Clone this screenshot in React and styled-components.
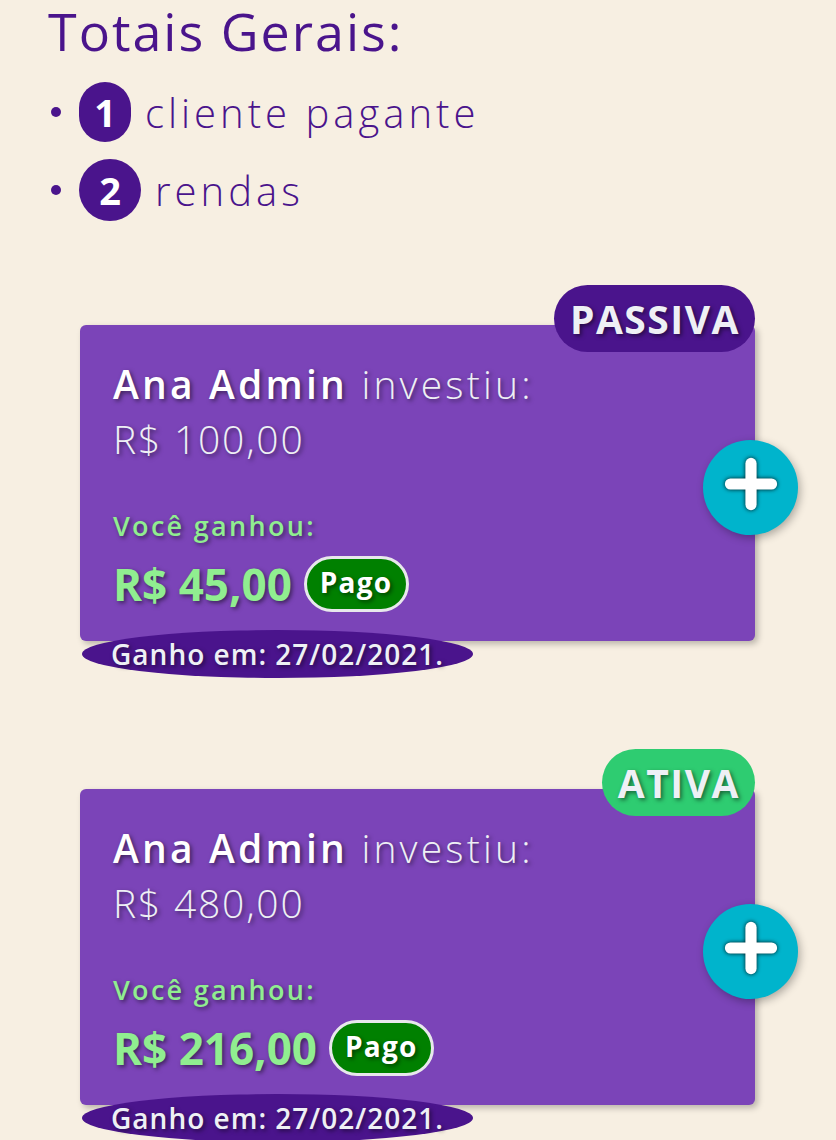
import styled, { createGlobalStyle } from "styled-components"

const GlobalStyle = createGlobalStyle`
  body {
    margin: 0;
    background: #f7efe2;
    font-family: "Open Sans", "Noto Sans", sans-serif;
  }
`;

const incomes = [
  { id: 1, type: "passiva", investor: "Ana Admin", invested: "R$ 100,00", earned: "R$ 45,00", date: "27/02/2021" },
  { id: 2, type: "ativa", investor: "Ana Admin", invested: "R$ 480,00", earned: "R$ 216,00", date: "27/02/2021" },
];

const PlusIcon = () => (
  <svg width="60" height="60" viewBox="0 0 60 60">
    <g stroke="#fff" strokeWidth="12" strokeLinecap="round">
      <line x1="30" y1="8" x2="30" y2="52" />
      <line x1="8" y1="30" x2="52" y2="30" />
    </g>
  </svg>
);

const App = () => {
  return (
    <Page>
      <GlobalStyle />
      <Title>Totais Gerais:</Title>
      <Totals>
        <TotalRow>
          <Dot />
          <Count $narrow>1</Count>
          <TotalText>cliente pagante</TotalText>
        </TotalRow>
        <TotalRow>
          <Dot />
          <Count>2</Count>
          <TotalText>rendas</TotalText>
        </TotalRow>
      </Totals>

      <CardList>
        {incomes.map((item) => (
          <Card key={item.id}>
            <TypeBadge $type={item.type}>{item.type.toUpperCase()}</TypeBadge>
            <Investor>
              <strong>{item.investor}</strong> investiu:
            </Investor>
            <Invested>{item.invested}</Invested>
            <EarnedLabel>Você ganhou:</EarnedLabel>
            <EarnedRow>
              <EarnedValue>{item.earned}</EarnedValue>
              <PaidBadge>Pago</PaidBadge>
            </EarnedRow>
            <DateRibbon>Ganho em: {item.date}.</DateRibbon>
            <AddButton>
              <PlusIcon />
            </AddButton>
          </Card>
        ))}
      </CardList>
    </Page>
  );
};

export default App;

const Page = styled.div`
  padding: 4px 0 40px 48px;
  color: #4a148c;
`;

const Title = styled.h1`
  margin: 0;
  font-size: 52px;
  font-weight: 500;
  line-height: 1.04;
  letter-spacing: 2px;
`;

const Totals = styled.div`
  display: flex;
  flex-direction: column;
  gap: 18px;
  margin-top: 24px;
`;

const TotalRow = styled.div`
  display: flex;
  align-items: center;
  height: 60px;
`;

const Dot = styled.span`
  width: 10px;
  height: 10px;
  margin: 0 18px 0 3px;
  border-radius: 50%;
  background: #4a148c;
`;

const Count = styled.span`
  display: flex;
  align-items: center;
  justify-content: center;
  height: ${(p) => (p.$narrow ? "60px" : "62px")};
  width: ${(p) => (p.$narrow ? "52px" : "62px")};
  border-radius: 31px;
  background: #4a148c;
  color: #fff;
  font-size: 38px;
  font-weight: 700;
`;

const TotalText = styled.span`
  margin-left: 14px;
  font-size: 40px;
  font-weight: 300;
  letter-spacing: 4px;
`;

const CardList = styled.div`
  display: flex;
  flex-direction: column;
  gap: 148px;
  margin: 105px 0 0 32px;
`;

const Card = styled.div`
  position: relative;
  width: 675px;
  height: 316px;
  box-sizing: border-box;
  padding: 31px 0 0 33px;
  background: #7b44b8;
  border-radius: 6px;
  box-shadow: 3px 3px 6px rgba(0, 0, 0, 0.25);
  color: #eef0f5;
  text-shadow: 2px 2px 4px rgba(0, 0, 0, 0.5);
`;

const TypeBadge = styled.div`
  position: absolute;
  top: -40px;
  right: 0;
  height: 67px;
  padding: 0 15px 0 16px;
  display: flex;
  align-items: center;
  border-radius: 34px;
  background: ${(p) => (p.$type === "ativa" ? "#2ecc71" : "#4a148c")};
  font-size: 39px;
  font-weight: 700;
  letter-spacing: 1.5px;
  color: #eef0f5;
`;

const Investor = styled.div`
  font-size: 39px;
  font-weight: 300;
  line-height: 1.42;
  letter-spacing: 3.2px;

  strong {
    font-weight: 600;
    color: #fff;
  }
`;

const Invested = styled.div`
  font-size: 39px;
  font-weight: 300;
  line-height: 1.42;
  letter-spacing: 1.8px;
`;

const EarnedLabel = styled.div`
  margin-top: 40px;
  font-size: 27px;
  font-weight: 600;
  letter-spacing: 2.3px;
  color: #90ee90;
`;

const EarnedRow = styled.div`
  display: flex;
  align-items: center;
  gap: 12px;
  margin-top: 10px;
`;

const EarnedValue = styled.span`
  font-size: 44px;
  font-weight: 700;
  color: #90ee90;
`;

const PaidBadge = styled.span`
  display: flex;
  align-items: center;
  box-sizing: border-box;
  height: 56px;
  padding: 0 14px 4px 13px;
  border: 3px solid #e8e8ec;
  border-radius: 28px;
  background: #008000;
  color: #fff;
  font-size: 28px;
  font-weight: 700;
  letter-spacing: 1.2px;
`;

const DateRibbon = styled.div`
  position: absolute;
  left: 2px;
  bottom: -37px;
  width: 391px;
  height: 48px;
  display: flex;
  align-items: center;
  justify-content: center;
  border-radius: 50%;
  background: #4a148c;
  font-size: 28px;
  font-weight: 600;
  letter-spacing: 1px;
  color: #eef0f5;
`;

const AddButton = styled.button`
  position: absolute;
  top: 115px;
  right: -43px;
  width: 95px;
  height: 95px;
  display: flex;
  align-items: center;
  justify-content: center;
  padding: 0 0 8px;
  border: none;
  border-radius: 50%;
  background: #00b4cc;
  box-shadow: 2px 3px 8px rgba(0, 0, 0, 0.3);

  svg {
    filter: drop-shadow(0 0 2px rgba(0, 0, 0, 0.9));
    width: 56px;
    height: 56px;
  }
`;
